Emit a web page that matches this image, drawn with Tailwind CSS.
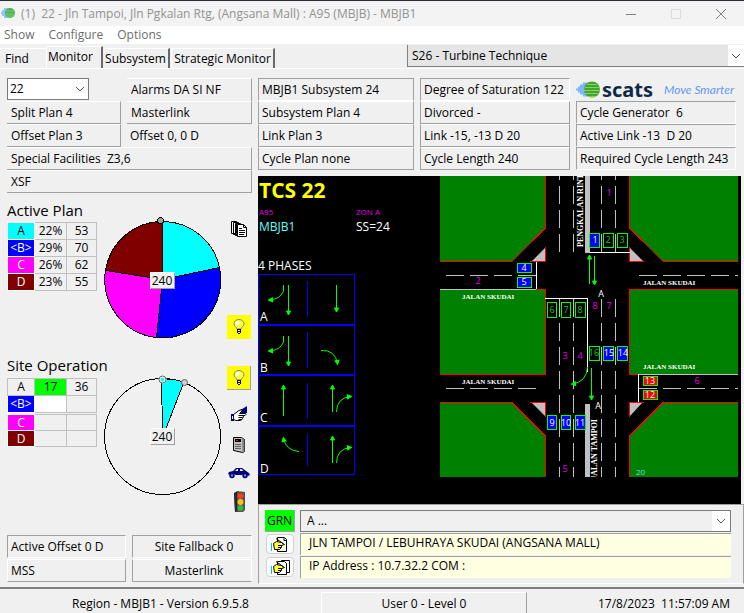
<!DOCTYPE html>
<html lang="en">
<head>
    <meta charset="UTF-8">
    <meta name="viewport" content="width=device-width, initial-scale=1.0">
    <title>22 - Jln Tampoi, Jln Pgkalan Rtg, (Angsana Mall) : A95 (MBJB) - MBJB1</title>
    <script src="https://cdn.jsdelivr.net/npm/@tailwindcss/browser@4"></script>
</head>
<body class="flex min-h-screen flex-col bg-[#f0f0f0] font-['Open_Sans',sans-serif] text-xs text-black">
    <!-- Title bar -->
    <header class="flex h-[26px] items-center border-t border-[#2b2b3a] bg-[#f3f3f3] text-[#929292]">
        <svg class="ml-px h-4 w-4" viewBox="0 0 16 16" aria-hidden="true">
            <path d="M0 7h6M1 5h5M1 9h5M3 3h4M3 11h4" stroke="#8ec5ff" stroke-width="2"/>
            <ellipse cx="9" cy="7" rx="5" ry="5" fill="#4cae4f"/>
            <path d="M5 5h9M4 8h10M5 10h8" stroke="#7fd07a"/>
        </svg>
        <h1 class="ml-1 grow whitespace-pre">(1)  22 - Jln Tampoi, Jln Pgkalan Rtg, (Angsana Mall) : A95 (MBJB) - MBJB1</h1>
        <button class="flex h-6 w-[45px] items-center justify-center" aria-label="Minimize">
            <svg width="10" height="10" viewBox="0 0 10 10" fill="none" stroke="#808080"><path d="M0 5.500h10"/></svg>
        </button>
        <button class="flex h-6 w-[45px] items-center justify-center" aria-label="Maximize" disabled>
            <svg width="10" height="10" viewBox="0 0 10 10" fill="none" stroke="#dcdcdc"><rect x=".5" y=".5" width="9" height="9"/></svg>
        </button>
        <button class="flex h-6 w-[46px] items-center justify-center" aria-label="Close">
            <svg width="10" height="10" viewBox="0 0 10 10" fill="none" stroke="#808080"><path d="M0 0l10 10M10 0L0 10"/></svg>
        </button>
    </header>

    <!-- Menu -->
    <nav class="flex h-[18px] items-center gap-[14px] bg-white px-1 text-[#6d6d6d]">
        <button>Show</button>
        <button>Configure</button>
        <button>Options</button>
    </nav>

    <!-- Tabs and strategic input -->
    <div class="flex h-[25px] items-end border-b border-white">
        <div class="flex grow items-end" role="tablist">
            <button role="tab" class="h-5 w-[46px] border-t border-white pl-[5px] text-left">Find</button>
            <button role="tab" aria-selected="true" class="h-[22px] w-[57px] border-t border-r-2 border-l border-t-white border-r-[#696969] border-l-white pb-[2px] pl-px text-left leading-[18px]">Monitor</button>
            <button role="tab" class="h-5 w-[67px] border-t border-r-2 border-t-white border-r-[#696969] text-center">Subsystem</button>
            <button role="tab" class="ml-px h-5 w-[104px] border-t border-r-2 border-l border-t-white border-r-[#696969] border-l-white text-center">Strategic Monitor</button>
        </div>
        <div class="relative mb-px w-[337px]">
            <select aria-label="Strategic input" class="h-[22px] w-full appearance-none border-b border-l border-[#808080] bg-[#e5e5e5] pl-1">
                <option>S26 - Turbine Technique</option>
            </select>
            <span class="pointer-events-none absolute top-0 right-0 flex h-[21px] w-4 items-center justify-center bg-white">
                <svg width="10" height="6" viewBox="0 0 10 6" fill="none" stroke="#444"><path d="M1 1l4 4 4-4"/></svg>
            </span>
        </div>
    </div>

    <main class="flex grow gap-[6px] border-b-2 border-[#808080] pt-[9px] pl-[7px]">
        <!-- Left column -->
        <div class="flex w-[245px] shrink-0 flex-col">
            <div class="grid auto-rows-[23px] grid-cols-[114px_125px] gap-x-[6px]">
                <div class="relative w-[82px]">
                    <select aria-label="Site" class="h-[22px] w-full appearance-none border border-[#7a7a7a] bg-white pl-[2px]">
                        <option>22</option>
                    </select>
                    <svg class="pointer-events-none absolute top-2 right-1" width="10" height="6" viewBox="0 0 10 6" fill="none" stroke="#555"><path d="M1 1l4 4 4-4"/></svg>
                </div>
                <div class="border-t border-r border-t-white border-r-[#a0a0a0] pl-1 leading-[22px]">Alarms DA SI NF</div>
                <div class="border-t border-r border-b border-t-white border-r-[#a0a0a0] border-b-[#a0a0a0] pl-1 leading-[21px]">Split Plan 4</div>
                <div class="border-t border-r border-b border-t-white border-r-[#a0a0a0] border-b-[#a0a0a0] pl-1 leading-[21px]">Masterlink</div>
                <div class="border-t border-r border-b border-t-white border-r-[#a0a0a0] border-b-[#a0a0a0] pl-1 leading-[21px]">Offset Plan 3</div>
                <div class="pl-[3px] leading-[23px]">Offset 0, 0 D</div>
                <div class="col-span-2 border-t border-r border-b border-t-white border-r-[#a0a0a0] border-b-[#a0a0a0] pl-1 leading-[21px] whitespace-pre">Special Facilities  Z3,6</div>
                <div class="col-span-2 border-t border-r border-b border-t-white border-r-[#a0a0a0] border-b-[#a0a0a0] pl-1 leading-[21px]">XSF</div>
            </div>

            <!-- Active plan -->
            <section class="mt-[5px] flex h-[157px]">
                <div class="w-[96px]">
                    <h2 class="h-6 text-[15px] leading-6 whitespace-nowrap">Active Plan</h2>
                    <table class="w-[90px] table-fixed border-collapse text-center leading-4">
                        <tr class="h-[17px]"><th class="w-[27px] border border-white bg-[#00ffff] p-0 font-normal">A</th><td class="w-[32px] border border-[#c0c0c0] p-0">22%</td><td class="border border-[#c0c0c0] p-0">53</td></tr>
                        <tr class="h-[17px]"><th class="border border-white bg-[#0000ff] p-0 font-normal text-white">&lt;B&gt;</th><td class="border border-[#c0c0c0] p-0">29%</td><td class="border border-[#c0c0c0] p-0">70</td></tr>
                        <tr class="h-[17px]"><th class="border border-white bg-[#ff00ff] p-0 font-normal text-white">C</th><td class="border border-[#c0c0c0] p-0">26%</td><td class="border border-[#c0c0c0] p-0">62</td></tr>
                        <tr class="h-[17px]"><th class="border border-white bg-[#800000] p-0 font-normal text-white">D</th><td class="border border-[#c0c0c0] p-0">23%</td><td class="border border-[#c0c0c0] p-0">55</td></tr>
                    </table>
                </div>
                <svg class="mt-4 shrink-0" width="120" height="126" viewBox="0 0 120 126" stroke="#000" shape-rendering="crispEdges">
                    <path d="M59.500 65.500V7.500A58 58 0 0 1 116.500 53.500Z" fill="#00ffff"/>
                    <path d="M59.500 65.500L116.500 53.500A58 58 0 0 1 53.500 123.500Z" fill="#0000ff"/>
                    <path d="M59.500 65.500L53.500 123.500A58 58 0 0 1 2.500 56.500Z" fill="#ff00ff"/>
                    <path d="M59.500 65.500L2.500 56.500A58 58 0 0 1 59.500 7.500Z" fill="#800000"/>
                    <circle cx="57.500" cy="6.500" r="3" fill="#a0a0a0"/>
                    <rect x="47.500" y="58.500" width="24" height="16" fill="#f0f0f0" stroke="#a0a0a0"/>
                    <path d="M47.500 74.500V58.500H71.500" fill="none" stroke="#fff"/>
                    <text x="59" y="71" text-anchor="middle" fill="#000" stroke="none" class="text-xs">240</text>
                </svg>
                <div class="flex flex-col items-center justify-between pt-[23px] pb-4 pl-1">
                    <button aria-label="Copy plans">
                        <svg width="16" height="17" viewBox="0 0 16 17" fill="#fff" stroke="#000">
                            <path d="M.5.500h5v12h-5z M2.500 1.500h5v12h-5z M4.500 2.500h5v12h-5z"/>
                            <path d="M6.500 3.500h6l3 3v9h-9z"/>
                            <path d="M12.500 3.500v3h3M8 7.500h3M8 9.500h6M8 11.500h6M8 13.500h5" fill="none"/>
                        </svg>
                    </button>
                    <button class="flex h-6 w-6 items-center justify-center bg-[#ffff00]" aria-label="Plan lamp">
                        <svg width="12" height="16" viewBox="0 0 12 16" fill="none">
                            <path d="M4 10C4 8 1 7.500 1 4.800a5 4.300 0 0 1 10 0C11 7.500 8 8 8 10Z" fill="#ffff40" stroke="#808080"/>
                            <circle cx="4.500" cy="4" r="2" fill="#fff"/>
                            <path d="M4 10.500h4M4 12.500h4M5 14.500h2M4.500 10v4M7.500 10v4" stroke="#000"/>
                        </svg>
                    </button>
                </div>
            </section>

            <!-- Site operation -->
            <section class="flex h-[180px]">
                <div class="w-[96px]">
                    <h2 class="h-[23px] text-[15px] leading-[21px] whitespace-nowrap">Site Operation</h2>
                    <table class="w-[90px] table-fixed border-collapse text-center leading-4">
                        <tr class="h-[17px]"><th class="w-[27px] border border-[#c0c0c0] p-0 font-normal">A</th><td class="w-[32px] border border-[#c0c0c0] bg-[#00ff00] p-0">17</td><td class="border border-[#c0c0c0] p-0">36</td></tr>
                        <tr class="h-[17px]"><th class="border border-white bg-[#0000ff] p-0 font-normal text-white">&lt;B&gt;</th><td class="border border-[#c0c0c0] bg-white p-0"></td><td class="border border-[#c0c0c0] p-0"></td></tr>
                    </table>
                    <table class="mt-px w-[90px] table-fixed border-collapse text-center leading-[15px]">
                        <tr class="h-[16px]"><th class="w-[27px] border border-white bg-[#ff00ff] p-0 font-normal text-white">C</th><td class="w-[32px] border border-[#c0c0c0] p-0"></td><td class="border border-[#c0c0c0] p-0"></td></tr>
                        <tr class="h-[16px]"><th class="border border-white bg-[#800000] p-0 font-normal text-white">D</th><td class="border border-[#c0c0c0] p-0"></td><td class="border border-[#c0c0c0] p-0"></td></tr>
                    </table>
                </div>
                <svg class="mt-4 shrink-0" width="120" height="126" viewBox="0 0 120 126" stroke="#000">
                    <circle cx="59.500" cy="65.500" r="58" fill="none" shape-rendering="crispEdges"/>
                    <path d="M60 60L58 8A58 58 0 0 1 81 11L62 60Z" fill="#00ffff" shape-rendering="crispEdges"/>
                    <circle cx="59.500" cy="8.500" r="3" fill="#00ffff" stroke="#fff" stroke-width="2"/>
                    <circle cx="59.500" cy="8.500" r="3.500" fill="none" stroke="#606060"/>
                    <circle cx="81.500" cy="11.500" r="3" fill="#d0d0d0" stroke="#606060"/>
                    <rect x="47.500" y="57.500" width="24" height="16" fill="#f0f0f0" stroke="#a0a0a0"/>
                    <path d="M47.500 73.500V57.500H71.500" fill="none" stroke="#fff"/>
                    <text x="59" y="70" text-anchor="middle" fill="#000" stroke="none" class="text-xs">240</text>
                </svg>
                <div class="flex flex-col items-center pt-[11px] pl-1">
                    <button class="flex h-6 w-6 items-center justify-center border-r border-b border-[#a0a0a0] bg-[#ffff00]" aria-label="Site lamp">
                        <svg width="12" height="16" viewBox="0 0 12 16" fill="none">
                            <path d="M4 10C4 8 1 7.500 1 4.800a5 4.300 0 0 1 10 0C11 7.500 8 8 8 10Z" fill="#ffff40" stroke="#808080"/>
                            <circle cx="4.500" cy="4" r="2" fill="#fff"/>
                            <path d="M4 10.500h4M4 12.500h4M5 14.500h2M4.500 10v4M7.500 10v4" stroke="#000"/>
                        </svg>
                    </button>
                    <button class="mt-4" aria-label="Manual control">
                        <svg width="18" height="17" viewBox="0 0 18 17">
                            <path d="M9 5L17 0v7l-4 1z" fill="#000080"/>
                            <path d="M3.500 8.500L9 4.500l3-1v1.500L9.500 7.500h6l.5 1-1 1h-2l.5 1.500-1 1-.5 1.500-2 1H6l-2.500-1z" fill="#fff" stroke="#000"/>
                            <path d="M8.500 9.500h5M8.500 11.500h4M8.500 13.500h3" stroke="#000"/>
                            <path d="M1 8h3v7H1z" fill="#000080"/>
                            <path d="M2 10h1v3H2z" fill="#fff"/>
                        </svg>
                    </button>
                    <button class="mt-[14px]" aria-label="Controller">
                        <svg width="14" height="16" viewBox="0 0 14 16">
                            <path d="M1.500.500h8l3 2v12l-2 1-9-2z" fill="#c0c0c0" stroke="#000"/>
                            <path d="M10 1l2.500 2v11.500l-2 1z" fill="#808080"/>
                            <path d="M3 2h6v3H3z" fill="#000"/>
                            <path d="M4 3h2v1H4z" fill="#f00"/>
                            <path d="M3.500 7.500h1m1 0h1m1 0h1M3.500 9.500h1m1 0h1m1 0h1M3.500 11.500h1m1 0h1m1 0h1" stroke="#000"/>
                        </svg>
                    </button>
                    <button class="mt-[14px]" aria-label="Vehicles">
                        <svg width="22" height="12" viewBox="0 0 22 12">
                            <path d="M0 7l1-2 4-1 3-3h6l4 3 3 2 1 2-2 1-3-2h-2l-1 1H8L6 7H4L2 8z" fill="#000080"/>
                            <path d="M7 4l2-2h1v2zM12 2h1.500l2 2H12z" fill="#f0f0f0"/>
                            <circle cx="4" cy="8.500" r="2" fill="#8080c0" stroke="#000080" stroke-width="1.500"/>
                            <circle cx="17" cy="8.500" r="2" fill="#8080c0" stroke="#000080" stroke-width="1.500"/>
                        </svg>
                    </button>
                    <button class="mt-3" aria-label="Signals">
                        <svg width="13" height="22" viewBox="0 0 13 22">
                            <path d="M1 2l3-2 8 1v18l-2 2H2z" fill="#505050"/>
                            <path d="M1 2l3-1v19l-2 1z" fill="#282828"/>
                            <circle cx="7.500" cy="5" r="3" fill="#f04020"/>
                            <circle cx="7.500" cy="11" r="3" fill="#f8c020"/>
                            <circle cx="7.500" cy="17" r="3" fill="#30b838"/>
                        </svg>
                    </button>
                </div>
            </section>

            <div class="grid auto-rows-[23px] grid-cols-[119px_120px] gap-x-[6px] gap-y-px">
                <div class="border border-t-[#a0a0a0] border-r-white border-b-white border-l-[#a0a0a0] pl-[3px] leading-[21px]">Active Offset 0 D</div>
                <div class="border border-t-[#a0a0a0] border-r-white border-b-white border-l-[#a0a0a0] pl-1 text-center leading-[21px]">Site Fallback 0</div>
                <div class="border border-t-white border-r-[#a0a0a0] border-b-[#a0a0a0] border-l-white pl-[3px] leading-[21px]">MSS</div>
                <div class="border border-t-white border-r-white border-b-[#a0a0a0] border-l-[#a0a0a0] pl-1 text-center leading-[21px]">Masterlink</div>
            </div>
        </div>

        <!-- Right column -->
        <div class="flex grow flex-col">
            <div class="mr-2 grid auto-rows-[23px] grid-cols-[156fr_150fr_160fr] gap-x-[6px]">
                <div class="border border-t-[#a0a0a0] border-r-[#a0a0a0] border-b-white border-l-[#a0a0a0] pl-[3px] leading-[21px]">MBJB1 Subsystem 24</div>
                <div class="border border-t-[#a0a0a0] border-r-white border-b-white border-l-[#a0a0a0] pl-[3px] leading-[21px]">Degree of Saturation 122</div>
                <div class="flex items-center">
                    <svg class="shrink-0" width="24" height="17" viewBox="0 0 24 17">
                        <path d="M0 8.500h8M4 4.500h6M4 12.500h6M2 6.500h8M2 10.500h8M7 2.500h5M7 14.500h5" stroke="#7db5ff" stroke-width="2"/>
                        <ellipse cx="16" cy="8.500" rx="8" ry="8" fill="#3fa535"/>
                        <path d="M11 3.500h10M9 6.500h14M8 9.500h16M9 12.500h13M12 15.500h8" stroke="#8ed050"/>
                    </svg>
                    <span class="ml-[2px] font-['Noto_Sans',sans-serif] text-xl leading-none font-bold text-[#0e2a47]">scats</span>
                    <span class="mr-[2px] ml-auto font-['Lato',sans-serif] text-xs leading-none whitespace-nowrap text-[#6496f8] italic">Move Smarter</span>
                </div>
                <div class="border border-t-white border-r-[#a0a0a0] border-b-[#a0a0a0] border-l-[#a0a0a0] pl-[3px] leading-[21px]">Subsystem Plan 4</div>
                <div class="border border-t-white border-r-[#a0a0a0] border-b-[#a0a0a0] border-l-[#a0a0a0] pl-[3px] leading-[21px]">Divorced -</div>
                <div class="border border-t-[#a0a0a0] border-r-white border-b-white border-l-[#a0a0a0] pl-[3px] leading-[21px] whitespace-pre">Cycle Generator  6</div>
                <div class="border border-t-white border-r-[#a0a0a0] border-b-[#a0a0a0] border-l-[#a0a0a0] pl-[3px] leading-[21px]">Link Plan 3</div>
                <div class="border border-t-white border-r-[#a0a0a0] border-b-[#a0a0a0] border-l-[#a0a0a0] pl-[3px] leading-[21px]">Link -15, -13 D 20</div>
                <div class="border border-t-[#a0a0a0] border-r-white border-b-white border-l-[#a0a0a0] pl-[3px] leading-[21px] whitespace-pre">Active Link -13  D 20</div>
                <div class="border border-t-white border-r-[#a0a0a0] border-b-[#a0a0a0] border-l-[#a0a0a0] pl-[3px] leading-[21px]">Cycle Plan none</div>
                <div class="border border-t-white border-r-[#a0a0a0] border-b-[#a0a0a0] border-l-[#a0a0a0] pl-[3px] leading-[21px]">Cycle Length 240</div>
                <div class="border border-t-[#a0a0a0] border-r-white border-b-white border-l-[#a0a0a0] pl-[3px] leading-[21px]">Required Cycle Length 243</div>
            </div>

            <!-- Intersection graphic -->
            <div class="mt-[6px] mr-[3px] bg-black">
                <svg class="block w-full" viewBox="0 0 483 328" fill="none">
                    <defs>
                        <marker id="arrow" viewBox="0 0 6 6" refX="4" refY="3" markerWidth="6" markerHeight="6" orient="auto">
                            <path d="M1 1l4 2-4 2z" fill="#00ff00" stroke="#00ff00"/>
                        </marker>
                        <clipPath id="mapArea"><rect x="182" y="0" width="298" height="301"/></clipPath>
                    </defs>

                    <text x="1" y="22" class="text-[21px] font-bold" fill="#ffff00">TCS 22</text>
                    <g class="text-[8px]" fill="#e600e6">
                        <text x="1" y="39">A95</text>
                        <text x="98" y="39">ZON A</text>
                    </g>
                    <text x="1" y="55" class="text-xs" fill="#66ffff">MBJB1</text>
                    <g class="text-xs" fill="#fff">
                        <text x="98" y="55">SS=24</text>
                        <text x="0" y="94">4 PHASES</text>
                        <text x="2" y="145">A</text>
                        <text x="2" y="196">B</text>
                        <text x="2" y="246">C</text>
                        <text x="2" y="297">D</text>
                    </g>

                    <!-- Phase boxes -->
                    <g stroke="#0000ff" shape-rendering="crispEdges">
                        <path d="M.5 98.500h96v200H.5z"/>
                        <path d="M0 149h97M0 199h97M0 250h97" stroke-width="2"/>
                        <path d="M49.500 105v36M49.500 156v36M49.500 207v36M49.500 258v32"/>
                    </g>
                    <g stroke="#00ff00">
                        <path marker-end="url(#arrow)" d="M25.500 109v6q-3 8-14 9"/>
                        <path marker-end="url(#arrow)" d="M30.500 109v29"/>
                        <path marker-end="url(#arrow)" d="M78.500 109v26"/>
                        <path marker-end="url(#arrow)" d="M25.500 160v6q-3 8-14 9"/>
                        <path marker-end="url(#arrow)" d="M30.500 160v29"/>
                        <path marker-end="url(#arrow)" d="M63 174.500q14-1 16.500 13"/>
                        <path marker-end="url(#arrow)" d="M25.500 240v-30"/>
                        <path marker-end="url(#arrow)" d="M74.500 236v-26"/>
                        <path marker-end="url(#arrow)" d="M78.500 236q0-14 14-15.500"/>
                        <path marker-end="url(#arrow)" d="M41 275.500q-13-1-15.500-13"/>
                        <path marker-end="url(#arrow)" d="M74.500 287v-26"/>
                        <path marker-end="url(#arrow)" d="M78.500 287q0-14 14-15.500"/>
                    </g>

                    <!-- Land blocks -->
                    <g fill="#008000">
                        <path d="M182 0h106v52l-34 34h-72z"/>
                        <path d="M371 0h109v86h-75l-34-34z"/>
                        <path d="M182 113h106v85H182z"/>
                        <path d="M371 113h109v85H371z"/>
                        <path d="M182 226h72l34 34v41H182z"/>
                        <path d="M480 226h-75l-34 34v41h109z"/>
                    </g>
                    <g fill="#c0c0c0">
                        <path d="M273 86h15V71z"/>
                        <path d="M371 71l15 15h-15z"/>
                        <path d="M273 226h15v15z"/>
                        <path d="M371 226h14l-14 15z"/>
                        <path d="M327 0h5v77h-5z"/>
                        <path d="M327 228h5v73h-5z"/>
                    </g>
                    <g stroke="#ff0000" shape-rendering="crispEdges">
                        <path d="M287.500 0v52l-34 33.500H182M371.500 0v52l34 33.500H480"/>
                        <path d="M278 113.500h9.500v85H182M480 113.500H371.500v85h9"/>
                        <path d="M182 226.500h72l33.500 33.500v41M480 226.500h-75l-33.500 33.500v41"/>
                        <path d="M272 85.500h15.500V71M371.500 71v14.500H386M272 226.500h15.500V241M386 226.500h-14.500V241"/>
                    </g>

                    <!-- Lane markings -->
                    <g stroke="#c0c0c0" shape-rendering="crispEdges">
                        <path d="M301.500 0v76M315.500 0v76M343.500 0v76M357.500 0v76" stroke-dasharray="18 6" stroke-dashoffset="14"/>
                        <path d="M301.500 123v178M315.500 123v178M343.500 123v178M357.500 123v178" stroke-dasharray="18 6"/>
                        <path d="M188 99.500h90M381 99.500h99M188 212.500h90M381 212.500h99" stroke-dasharray="18 6"/>
                        <path d="M182 113.500h96M380 198.500h100"/>
                    </g>
                    <g stroke="#fff" shape-rendering="crispEdges">
                        <path d="M332 76.500h40M278.500 86v27M287 122.500h42.500V196M380.500 198v28"/>
                    </g>
                    <g stroke="#00ff00">
                        <path marker-end="url(#arrow)" d="M331.500 108V80"/>
                        <path marker-end="url(#arrow)" d="M336.500 80v28"/>
                        <path marker-end="url(#arrow)" d="M333.500 192v31"/>
                        <path marker-end="url(#arrow)" d="M329.500 191q-1 15-15 17"/>
                    </g>

                    <!-- Detectors -->
                    <g stroke="#00ff00" shape-rendering="crispEdges">
                        <path fill="#0000ff" d="M331.500 57.500h10v14h-10zM259.500 87.500h14v9h-14zM259.500 101.500h14v10h-14zM345.500 170.500h10v14h-10zM359.500 170.500h10v14h-10zM289.500 239.500h9v14h-9zM303.500 239.500h9v14h-9zM317.500 239.500h10v14h-10z"/>
                        <path fill="#000" d="M345.500 57.500h10v14h-10zM359.500 57.500h10v14h-10zM289.500 126.500h9v15h-9zM303.500 126.500h9v15h-9zM317.500 126.500h10v15h-10zM331.500 170.500h10v14h-10z"/>
                        <path fill="#ff0000" d="M385.500 200.500h14v9h-14zM385.500 214.500h14v9h-14z"/>
                    </g>
                    <g class="text-[9px]" text-anchor="middle" fill="#fff">
                        <text x="337" y="67">1</text>
                        <text x="266" y="95">4</text>
                        <text x="266" y="109">5</text>
                        <text x="351" y="180">15</text>
                        <text x="365" y="180">14</text>
                        <text x="294" y="250">9</text>
                        <text x="308" y="250">10</text>
                        <text x="322" y="250">11</text>
                        <text x="392" y="208">13</text>
                        <text x="392" y="222">12</text>
                        <text x="343" y="121">A</text>
                        <text x="340" y="233">A</text>
                    </g>
                    <g class="text-[9px]" text-anchor="middle" fill="#00d000">
                        <text x="350" y="67">2</text>
                        <text x="364" y="67">3</text>
                        <text x="294" y="137">6</text>
                        <text x="308" y="137">7</text>
                        <text x="322" y="137">8</text>
                        <text x="336" y="180">16</text>
                    </g>
                    <g class="text-[9px]" text-anchor="middle" fill="#e600e6">
                        <text x="351" y="20">1</text>
                        <text x="220" y="108">2</text>
                        <text x="337" y="133">8</text>
                        <text x="351" y="133">7</text>
                        <text x="307" y="183">3</text>
                        <text x="322" y="183">4</text>
                        <text x="439" y="208">6</text>
                        <text x="307" y="296">5</text>
                    </g>
                    <text x="378" y="299" class="text-[8px]" fill="#66e0e0">20</text>

                    <!-- Street names -->
                    <g class="font-['Liberation_Serif',serif] font-bold" fill="#fff" clip-path="url(#mapArea)">
                        <g class="text-[7px]">
                            <text x="204" y="123">JALAN SKUDAI</text>
                            <text x="385" y="109">JALAN SKUDAI</text>
                            <text x="204" y="208">JALAN SKUDAI</text>
                            <text x="385" y="193">JALAN SKUDAI</text>
                        </g>
                        <g class="text-[8px]">
                            <text transform="translate(325 71) rotate(-90)">PENGKALAN RINTING</text>
                            <text transform="translate(339 243) rotate(-90)" text-anchor="end">JALAN TAMPOI</text>
                        </g>
                    </g>
                </svg>
            </div>

            <!-- Site messages -->
            <div class="mb-[3px] grid auto-rows-[22px] grid-cols-[30px_1fr] gap-x-[5px] gap-y-px border border-t-[#a0a0a0] border-r-[#a0a0a0] border-b-white border-l-[#a0a0a0] py-[5px] pr-3 pl-[6px]">
                <div class="border-r border-b border-[#a0a0a0] bg-[#00ff00] text-center leading-[21px]">GRN</div>
                <div class="relative">
                    <select aria-label="Phase" class="h-[22px] w-full appearance-none border border-[#7a7a7a] bg-[#f0f0f0] pl-[6px]">
                        <option>A ...</option>
                    </select>
                    <span class="pointer-events-none absolute top-px right-px flex h-5 w-[18px] items-center justify-center bg-white">
                        <svg width="10" height="6" viewBox="0 0 10 6" fill="none" stroke="#555"><path d="M1 1l4 4 4-4"/></svg>
                    </span>
                </div>
                <button class="mx-px my-px flex items-center justify-center rounded border border-[#d0d0d0] bg-[#fdfdfd]" aria-label="Edit site note">
                    <svg width="18" height="15" viewBox="0 0 18 15">
                        <path d="M6.500.500h7l2 2v12h-9z" fill="#fff" stroke="#000"/>
                        <path d="M13 1v2.500h3" fill="none" stroke="#000"/>
                        <path d="M2.500 6.500l3-2 5 1 3 2-3 1v2l-2 2h-5z" fill="#ffff40" stroke="#000"/>
                        <path d="M5 1.500l7 5M7 8.500h4M7 10.500h3" stroke="#000"/>
                        <path d="M0 6h1v8H0z" fill="#00c8d8"/>
                    </svg>
                </button>
                <div class="border-t border-l border-[#a0a0a0] bg-[#ffffe1] pl-2 leading-[18px]">JLN TAMPOI / LEBUHRAYA SKUDAI (ANGSANA MALL)</div>
                <button class="mx-px my-px flex items-center justify-center rounded border border-[#d0d0d0] bg-[#fdfdfd]" aria-label="Copy site note">
                    <svg width="19" height="15" viewBox="0 0 19 15">
                        <path d="M10.500.500h8v12h-8z" fill="#fff" stroke="#000"/>
                        <path d="M6.500 1.500h7l2 2v11h-9z" fill="#fff" stroke="#000"/>
                        <path d="M2.500 6.500l3-2 5 1 3 2-3 1v2l-2 2h-5z" fill="#ffff40" stroke="#000"/>
                        <path d="M5 1.500l7 5M7 8.500h4M7 10.500h3" stroke="#000"/>
                        <path d="M0 6h1v8H0z" fill="#00c8d8"/>
                    </svg>
                </button>
                <div class="border-t border-l border-[#a0a0a0] bg-[#ffffe1] pl-2 leading-[18px]">IP Address : 10.7.32.2 COM :</div>
            </div>
        </div>
    </main>

    <!-- Status bar -->
    <footer class="grid h-[25px] grid-cols-[321fr_206fr_217fr] items-end pt-[3px] leading-[22px]">
        <div class="text-center">Region - MBJB1 - Version 6.9.5.8</div>
        <div class="border-t border-r border-l border-t-white border-r-[#a0a0a0] border-l-white text-center">User 0 - Level 0</div>
        <div class="pr-[14px] text-right whitespace-pre">17/8/2023  11:57:09 AM</div>
    </footer>
</body>
</html>
